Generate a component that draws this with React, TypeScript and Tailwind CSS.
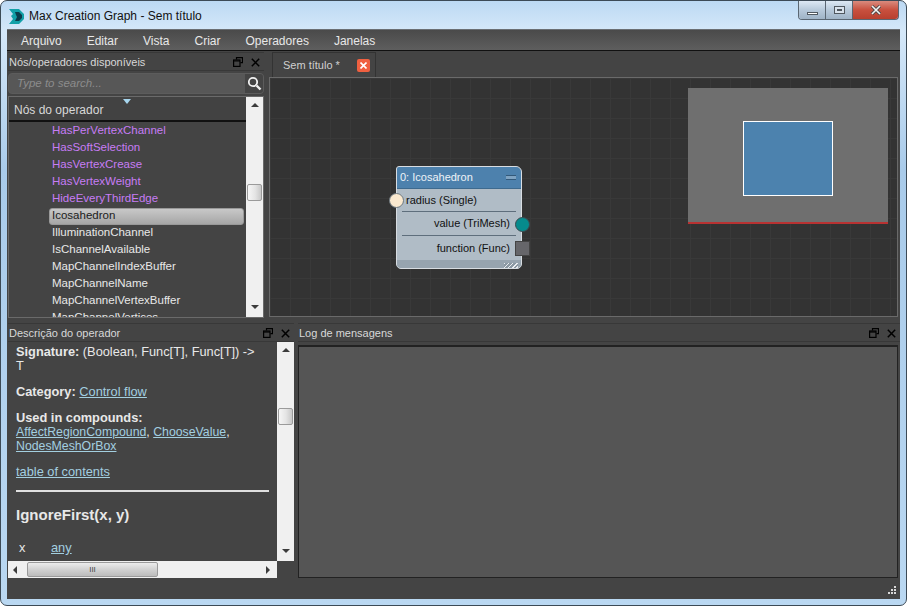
import React from 'react';

const menus = ['Arquivo', 'Editar', 'Vista', 'Criar', 'Operadores', 'Janelas'];

const operators: { name: string; kind: 'purple' | 'plain' | 'selected' }[] = [
  { name: 'HasPerVertexChannel', kind: 'purple' },
  { name: 'HasSoftSelection', kind: 'purple' },
  { name: 'HasVertexCrease', kind: 'purple' },
  { name: 'HasVertexWeight', kind: 'purple' },
  { name: 'HideEveryThirdEdge', kind: 'purple' },
  { name: 'Icosahedron', kind: 'selected' },
  { name: 'IlluminationChannel', kind: 'plain' },
  { name: 'IsChannelAvailable', kind: 'plain' },
  { name: 'MapChannelIndexBuffer', kind: 'plain' },
  { name: 'MapChannelName', kind: 'plain' },
  { name: 'MapChannelVertexBuffer', kind: 'plain' },
  { name: 'MapChannelVertices', kind: 'plain' },
];

function PanelHeader({ title }: { title: string }) {
  return (
    <div className="flex h-[19px] shrink-0 items-center justify-between border-y border-[#383838] bg-[#444444] pl-[1px] pr-[4px] pt-[1px] text-[11px] text-[#d8d8d8]">
      <span>{title}</span>
      <div className="flex items-center gap-[8px]">
        <svg width="10" height="10" viewBox="0 0 10 10" fill="none" stroke="#000" strokeWidth="1.2">
          <path d="M3.5 2.5V.6h6v5H7.5" />
          <rect x=".6" y="3" width="6.4" height="6.4" />
          <path d="M1 4h6" />
        </svg>
        <svg width="9" height="9" viewBox="0 0 9 9" stroke="#000" strokeWidth="1.5">
          <path d="M.8.8l7.4 7.4M8.2.8L.8 8.2" />
        </svg>
      </div>
    </div>
  );
}

function Arrow({ dir }: { dir: 'up' | 'down' | 'left' | 'right' }) {
  const d = { up: 'M0 5L4 1l4 4z', down: 'M0 1h8L4 5z', left: 'M5 0v8L1 4z', right: 'M1 0v8l4-4z' }[dir];
  return (
    <svg width="8" height="8" viewBox="0 0 8 8" className={dir === 'left' || dir === 'right' ? '' : 'mx-auto'}>
      <path d={d} fill="#3c3c3c" />
    </svg>
  );
}

function VScroll({ thumbTop }: { thumbTop: string }) {
  return (
    <div className="flex w-[17px] shrink-0 flex-col justify-between bg-[#f0f0f0] py-[5px]">
      <Arrow dir="up" />
      <div className={`mx-auto h-[17px] w-[15px] rounded-[2px] border border-[#9a9a9a] bg-[linear-gradient(90deg,#f6f6f6,#e4e4e4_55%,#c8c8c8)] ${thumbTop}`} />
      <Arrow dir="down" />
    </div>
  );
}

function NodeCard() {
  return (
    <div className="absolute left-[126px] top-[88px] w-[126px] text-[11px] text-[#111]">
      <div className="overflow-hidden rounded-b-[5px] rounded-tl-[3px] rounded-tr-[6px] border border-[#d8dde2] bg-[#b0bcc6]">
        <div className="flex h-[22px] items-center justify-between border-b border-[#3e6a8e] bg-[#4d81ad] pl-[3px] pr-[5px] text-[#eef3f7]">
          <span>0: Icosahedron</span>
          <div className="h-[5px] w-[10px] border-y border-[#33597a] bg-[#7fa3c2]" />
        </div>
        <div className="flex h-[22px] items-center pl-[9px]">radius (Single)</div>
        <div className="mx-[5px] h-px bg-[#5e6e7c]" />
        <div className="flex h-[23px] items-center justify-end pr-[11px]">value (TriMesh)</div>
        <div className="mx-[5px] h-px bg-[#5e6e7c]" />
        <div className="flex h-[24px] items-center justify-end pr-[11px]">function (Func)</div>
        <div className="flex h-[8px] items-end justify-end bg-[#97a4af] pr-[3px]">
          <div className="h-[5px] w-[14px] bg-[repeating-linear-gradient(135deg,#e8ecef_0px,#e8ecef_1px,#8b98a3_1px,#8b98a3_3px)]" />
        </div>
      </div>
      {/* connector pins sit on the node's edge */}
      <div className="absolute left-[-7px] top-[27px] h-[15px] w-[15px] rounded-full border border-[#6d7880] bg-[#fbe9cf]" />
      <div className="absolute right-[-8px] top-[51px] h-[15px] w-[15px] rounded-full border border-[#3c4a50] bg-[#068b8d]" />
      <div className="absolute right-[-8px] top-[75px] h-[15px] w-[15px] border border-[#444] bg-[#66666a]" />
    </div>
  );
}

function Minimap() {
  return (
    <div className="absolute left-[418px] top-[10px] flex h-[136px] w-[200px] items-start justify-center border-b-2 border-[#b83232] bg-[#6f6f6f] pt-[33px]">
      <div className="ml-[-1px] h-[75px] w-[90px] border border-white bg-[#4c82ae]" />
    </div>
  );
}

function Link({ children }: { children: React.ReactNode }) {
  return <span className="text-[#a3cfe0] underline">{children}</span>;
}

export default function App() {
  return (
    <div className="flex h-[606px] w-[907px] flex-col overflow-hidden rounded-[7px] border border-[#3c4a56] bg-[linear-gradient(180deg,#bcd9f3_0%,#d5e8f9_5%,#a9cbea_28%,#bad8f2_100%)] font-['Liberation_Sans',Arial,sans-serif] text-[12px] text-[#e4e4e4]">
      {/* title bar */}
      <div className="flex h-[28px] shrink-0 items-start justify-between pl-[7px] pr-[7px]">
        <div className="flex h-[30px] items-center gap-[3px] text-[#111]">
          <svg width="17" height="17" viewBox="0 0 17 17">
            <path d="M1 1h10l5 5v5l-5 5H1l4-5-2-3 2-2z" fill="#12a0a8" />
            <path d="M7 4h4l3 3v3l-3 3H7l2-4-1-2z" fill="#0b3c4c" />
          </svg>
          <span className="ml-[1px] text-[12px]">Max Creation Graph - Sem título</span>
        </div>
        <div className="flex h-[19px] overflow-hidden rounded-b-[4px] border border-t-0 border-[#5a6672]">
          <div className="flex w-[27px] items-end justify-center border-r border-[#5a6672] bg-[linear-gradient(180deg,#dde9f4,#b7c9da_50%,#9fb3c6)] pb-[4px]">
            <div className="h-[3px] w-[11px] border border-[#50585f] bg-white" />
          </div>
          <div className="flex w-[27px] items-center justify-center border-r border-[#5a6672] bg-[linear-gradient(180deg,#dde9f4,#b7c9da_50%,#9fb3c6)]">
            <div className="flex h-[8px] w-[11px] items-center justify-center border border-[#50585f] bg-[#d8e2ec]">
              <div className="h-[2px] w-[5px] border border-[#50585f]" />
            </div>
          </div>
          <div className="flex w-[45px] items-center justify-center bg-[linear-gradient(180deg,#d98b7e,#c8503e_50%,#b8402f)]">
            <svg width="12" height="10" viewBox="0 0 12 10" stroke="#4a4a4a" strokeWidth="3.2">
              <path d="M2 1l8 8M10 1L2 9" />
              <path d="M2 1l8 8M10 1L2 9" stroke="#f4f4f4" strokeWidth="1.6" />
            </svg>
          </div>
        </div>
      </div>

      {/* client area */}
      <div className="mx-[6px] mb-[6px] flex min-h-0 flex-1 flex-col border-t border-[#6b6f73] bg-[#444444]">
        <div className="flex h-[21px] shrink-0 items-center border-b border-[#111] bg-[linear-gradient(180deg,#4a4a4a,#5e5e5e)] pl-[14px] pt-[2px] text-[#e8e8e8]">
          {menus.map((m) => (
            <span key={m} className="mr-[25px]">{m}</span>
          ))}
        </div>

        {/* upper row */}
        <div className="flex h-[271px] shrink-0 pt-[1px]">
          <div className="flex w-[257px] shrink-0 flex-col pb-[4px] pl-[1px]">
            <PanelHeader title="Nós/operadores disponíveis" />
            <div className="mt-[2px] flex h-[21px] shrink-0 items-center overflow-hidden rounded-[4px] border border-[#5c5c5c] bg-[#575757]">
              <span className="flex-1 pl-[8px] text-[11.5px] italic text-[#8c8c8c]">Type to search...</span>
              <div className="flex h-full w-[18px] items-center justify-center bg-[#444444]">
                <svg width="15" height="15" viewBox="0 0 15 15" fill="none">
                  <circle cx="6" cy="6" r="4.2" stroke="#f0f0f0" strokeWidth="1.8" />
                  <path d="M9.5 9.5l4 4" stroke="#f0f0f0" strokeWidth="2.4" />
                </svg>
              </div>
            </div>
            <div className="mt-[2px] flex min-h-0 flex-1 border border-[#6a6a6a]">
              <div className="flex min-w-0 flex-1 flex-col overflow-hidden text-[11.5px]">
                <div className="relative flex h-[25px] shrink-0 items-center border-b-2 border-[#111] bg-[#424242] pl-[5px] pt-[3px] text-[12px] text-[#d8d8d8]">
                  Nós do operador
                  <svg className="absolute left-[114px] top-[2px]" width="8" height="5" viewBox="0 0 8 5">
                    <path d="M0 0h8L4 5z" fill="#a7d6ee" />
                  </svg>
                </div>
                {operators.map((op) => (
                  <div key={op.name} className="flex h-[17px] shrink-0 items-center pl-[43px] pt-[1px]">
                    {op.kind === 'selected' ? (
                      <span className="ml-[-3px] flex h-[17px] w-[195px] items-center rounded-[3px] border border-[#999] bg-[linear-gradient(180deg,#c8c8c8,#a6a6a6)] pl-[2px] text-[#1c1c1c]">
                        {op.name}
                      </span>
                    ) : (
                      <span className={op.kind === 'purple' ? 'text-[#c77cf5]' : 'text-[#e8e8e8]'}>{op.name}</span>
                    )}
                  </div>
                ))}
              </div>
              <VScroll thumbTop="mb-[30px]" />
            </div>
          </div>

          {/* document area */}
          <div className="ml-[5px] flex min-w-0 flex-1 flex-col">
            <div className="flex h-[25px] shrink-0 items-end">
              <div className="ml-[3px] flex h-[25px] w-[104px] items-center justify-between border-x border-t border-[#333] bg-[#444444] pl-[10px] pr-[5px] text-[11px] text-[#d0d0d0]">
                <span>Sem título *</span>
                <div className="flex h-[13px] w-[13px] items-center justify-center rounded-[2px] bg-[#f06040]">
                  <svg width="7" height="7" viewBox="0 0 7 7" stroke="#fff" strokeWidth="1.6">
                    <path d="M.5.5l6 6M6.5.5l-6 6" />
                  </svg>
                </div>
              </div>
            </div>
            <div className="relative mb-[5px] mr-[2px] min-h-0 flex-1 border border-[#6a6a6a] bg-[#333333] bg-[linear-gradient(#393939_1px,transparent_1px),linear-gradient(90deg,#393939_1px,transparent_1px)] bg-[size:20px_20px]">
              <NodeCard />
              <Minimap />
            </div>
          </div>
        </div>

        {/* lower row */}
        <div className="flex min-h-0 flex-1 pt-[1px]">
          <div className="flex w-[287px] shrink-0 flex-col pl-[1px]">
            <PanelHeader title="Descrição do operador" />
            <div className="flex min-h-0 flex-1">
              <div className="min-w-0 flex-1 overflow-hidden pl-[8px] pr-[8px] pt-[3px] text-[12.8px] leading-[14px] text-[#e8e8e8]">
                <p>
                  <b>Signature:</b> (Boolean, Func[T], Func[T]) -&gt;
                  <br />T
                </p>
                <p className="mt-[12px]">
                  <b>Category:</b> <Link>Control flow</Link>
                </p>
                <p className="mt-[12px]">
                  <b>Used in compounds:</b>
                  <br />
                  <span className="text-[12.3px]">
                    <Link>AffectRegionCompound</Link>, <Link>ChooseValue</Link>,
                    <br />
                    <Link>NodesMeshOrBox</Link>
                  </span>
                </p>
                <p className="mt-[12px]">
                  <Link>table of contents</Link>
                </p>
                <div className="mt-[11px] h-[2px] bg-[#e0e0e0]" />
                <p className="mt-[16px] text-[15px] font-bold">IgnoreFirst(x, y)</p>
                <div className="mt-[19px] flex">
                  <span className="w-[35px] pl-[3px]">x</span>
                  <Link>any</Link>
                </div>
              </div>
              <VScroll thumbTop="mb-[70px]" />
            </div>
            <div className="flex h-[17px] w-[269px] shrink-0 items-center justify-between bg-[#f0f0f0] px-[4px]">
              <Arrow dir="left" />
              <div className="ml-[7px] flex h-[15px] w-[131px] items-center justify-center rounded-[2px] border border-[#9a9a9a] bg-[linear-gradient(180deg,#ececec,#cfcfcf_55%,#bcbcbc)]">
                <span className="text-[8px] leading-none text-[#444]">III</span>
              </div>
              <div className="flex-1" />
              <Arrow dir="right" />
            </div>
          </div>

          <div className="ml-[4px] flex min-w-0 flex-1 flex-col">
            <PanelHeader title="Log de mensagens" />
            <div className="mr-[2px] mt-[3px] min-h-0 flex-1 border border-t-2 border-[#222] bg-[#555555]" />
          </div>
        </div>

        {/* status bar */}
        <div className="flex h-[21px] shrink-0 items-end justify-end pb-[3px] pr-[3px]">
          <svg width="10" height="10" viewBox="0 0 10 10" fill="#d8d8d8">
            <path d="M7 0h2v2H7zM4 3h2v2H4zM7 3h2v2H7zM1 6h2v2H1zM4 6h2v2H4zM7 6h2v2H7z" />
          </svg>
        </div>
      </div>
    </div>
  );
}
